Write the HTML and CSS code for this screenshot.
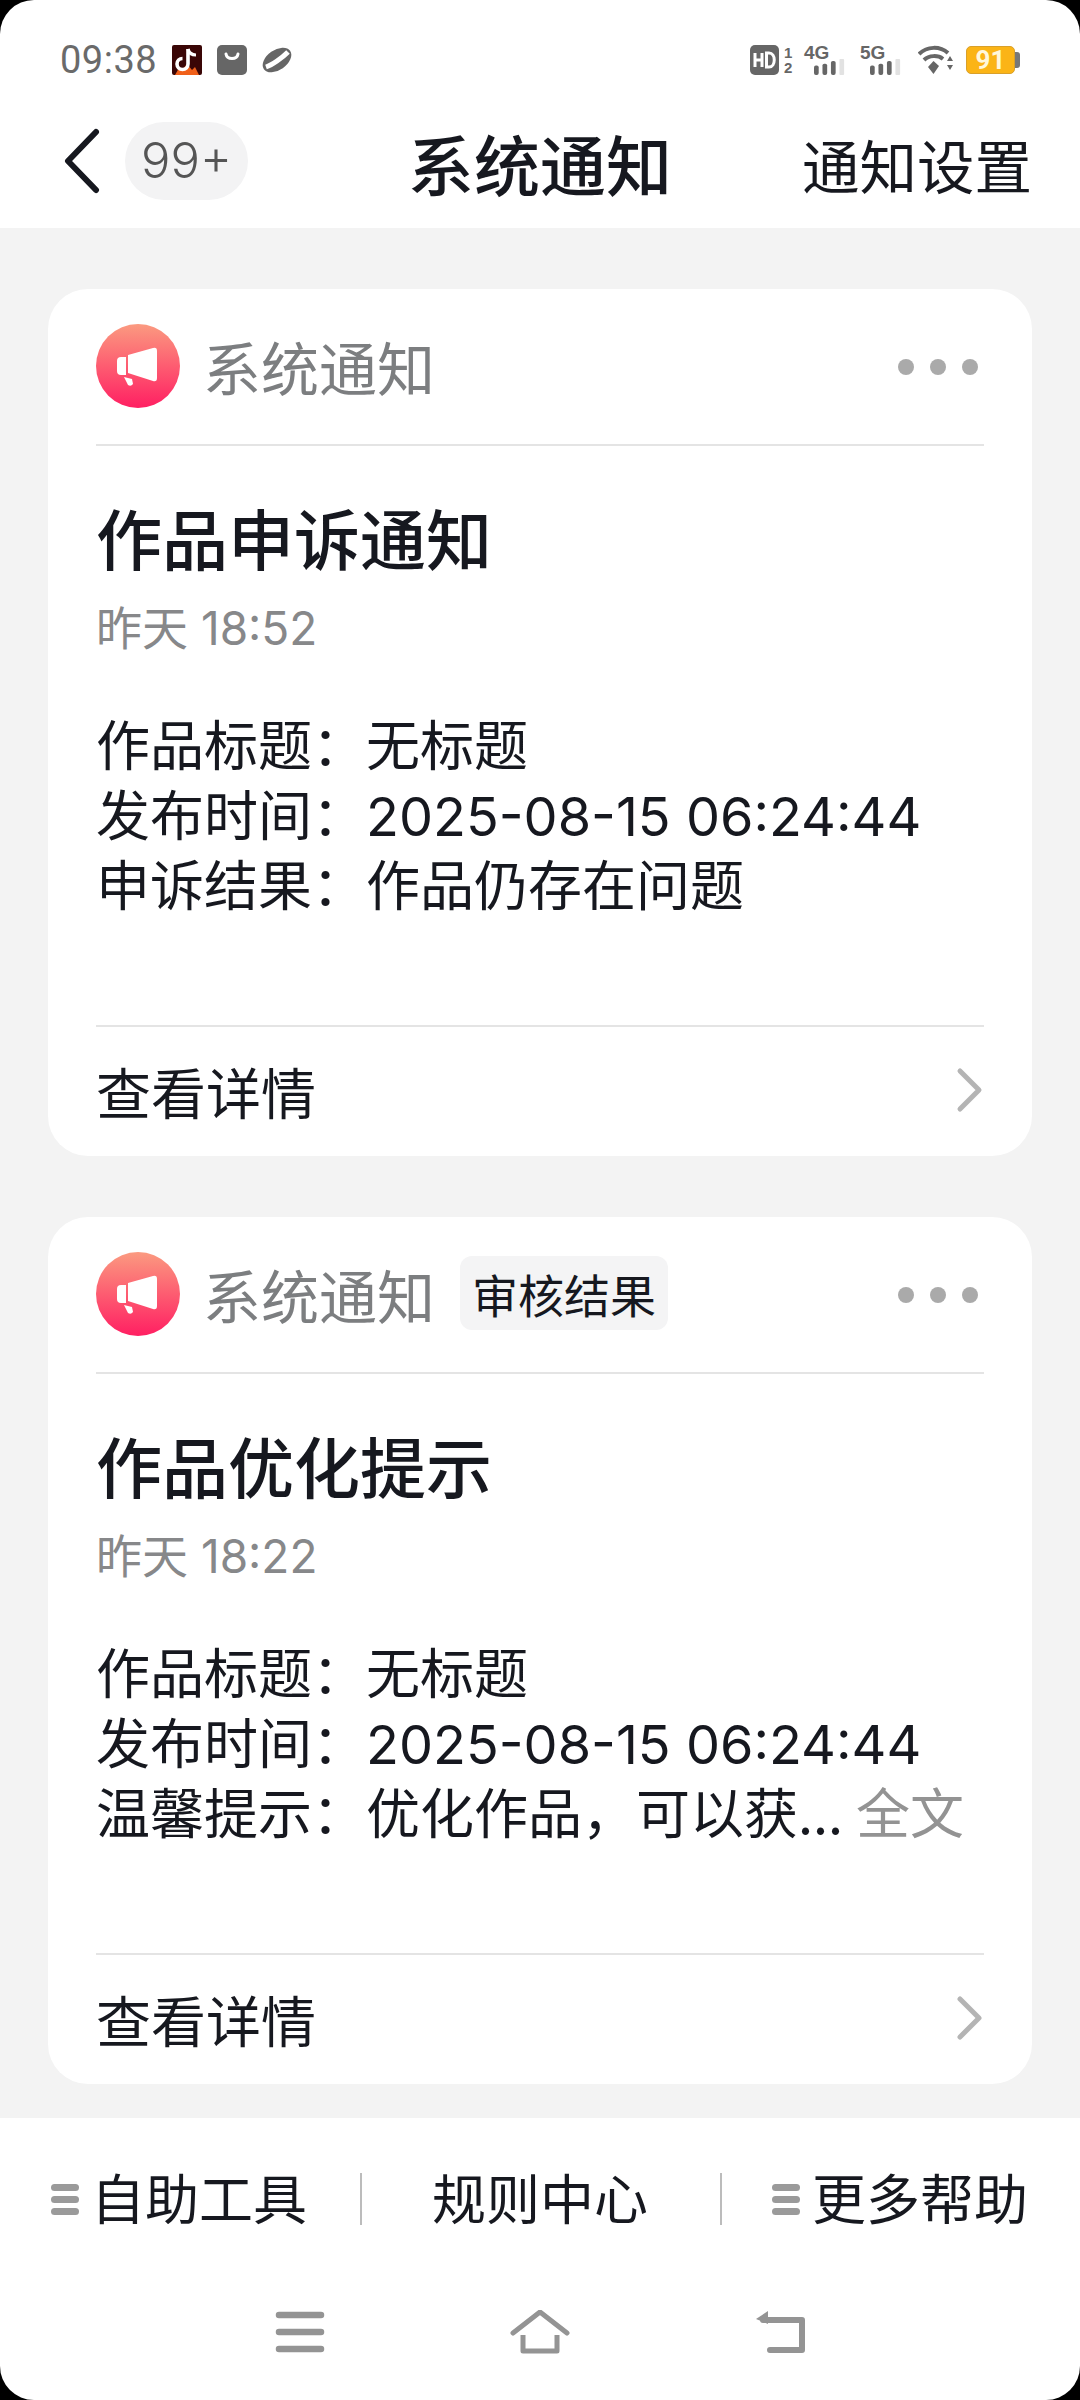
FILE: index.html
```html
<!DOCTYPE html>
<html lang="zh">
<head>
    <meta charset="utf-8">
    <title>系统通知</title>
    <link rel="stylesheet" href="styles.css">
</head>
<body>
    <div class="screen">
        <div class="status">
            <div class="status-left">
                <span class="clock">09:38</span>
                <svg class="s-icon" viewBox="0 0 30 30">
                    <rect width="30" height="30" rx="2" fill="#3a0606"/>
                    <path d="M3 30 L7 23 L10 25 L15 19 L20 25 L23 22 L27 30 Z" fill="#f0601a"/>
                    <path d="M16 4 V19 A5.5 5.5 0 1 1 10.500 13.500" fill="none" stroke="#fff" stroke-width="3.600"/>
                    <path d="M16 4 C17 8 20 10 24 10" fill="none" stroke="#fff" stroke-width="3.200"/>
                </svg>
                <svg class="s-icon" viewBox="0 0 30 30">
                    <rect width="30" height="30" rx="5" fill="#666"/>
                    <path d="M9 9 C10 15 20 15 21 9" fill="none" stroke="#fff" stroke-width="3" stroke-linecap="round"/>
                </svg>
                <svg class="s-icon" viewBox="0 0 30 30">
                    <ellipse cx="15" cy="15" rx="16" ry="10" fill="#666" transform="rotate(-35 15 15)"/>
                    <path d="M4 22 C10 20 20 13 26 7" fill="none" stroke="#fff" stroke-width="5"/>
                </svg>
            </div>
            <div class="status-right">
                <svg class="hd" viewBox="0 0 29 30">
                    <rect width="29" height="30" rx="5" fill="#666"/>
                    <path d="M5 8 V22 M12 8 V22 M5 15 H12" fill="none" stroke="#fff" stroke-width="3"/>
                    <path d="M16.500 8 V22 H19 C26 22 26 8 19 8 Z" fill="none" stroke="#fff" stroke-width="3"/>
                </svg>
                <span class="sim-num"><span>1</span><span>2</span></span>
                <span class="signal">
                    <span class="net">4G</span>
                    <svg class="bars" viewBox="0 0 34 17">
                        <rect x="0" y="7" width="5" height="10" rx="2" fill="#666"/>
                        <rect x="9" y="5" width="5" height="12" rx="2" fill="#666"/>
                        <rect x="18" y="2" width="5" height="15" rx="2" fill="#666"/>
                        <rect x="27" y="0" width="5" height="17" rx="1" fill="#e2e2e2"/>
                    </svg>
                </span>
                <span class="signal">
                    <span class="net">5G</span>
                    <svg class="bars" viewBox="0 0 34 17">
                        <rect x="0" y="7" width="5" height="10" rx="2" fill="#666"/>
                        <rect x="9" y="5" width="5" height="12" rx="2" fill="#666"/>
                        <rect x="18" y="2" width="5" height="15" rx="2" fill="#666"/>
                        <rect x="27" y="0" width="5" height="17" rx="1" fill="#e2e2e2"/>
                    </svg>
                </span>
                <svg class="wifi" viewBox="0 0 37 30">
                    <path d="M1 9 C9 1 22 1 30 8" fill="none" stroke="#666" stroke-width="4"/>
                    <path d="M6 15 C11 10 20 10 25 14" fill="none" stroke="#666" stroke-width="4"/>
                    <path d="M10 22 L15.500 16 L21 21 L15.500 29 Z" fill="#666"/>
                    <path d="M29 16 L32 11 L35 16 Z M29 20 H35 L32 25 Z" fill="#666"/>
                </svg>
                <div class="battery"><span class="level">91</span><span class="cap"></span></div>
            </div>
        </div>

        <div class="nav">
            <svg class="back" viewBox="0 0 40 66">
                <path d="M34 4 L6 33 L34 62" fill="none" stroke="#16181f" stroke-width="6" stroke-linecap="round" stroke-linejoin="round"/>
            </svg>
            <span class="count">99+</span>
            <h1 class="nav-title">系统通知</h1>
            <span class="nav-link">通知设置</span>
        </div>

        <div class="list">
            <div class="card">
                <div class="card-head">
                    <svg class="horn" viewBox="0 0 84 84">
                        <use href="#horn-shape"/>
                    </svg>
                    <span class="source">系统通知</span>
                    <span class="dots"><i></i><i></i><i></i></span>
                </div>
                <div class="card-title">作品申诉通知</div>
                <div class="card-time">昨天 18:52</div>
                <div class="rows">
                    <div class="row"><span class="key">作品标题：</span><span>无标题</span></div>
                    <div class="row"><span class="key">发布时间：</span><span class="num">2025-08-15 06:24:44</span></div>
                    <div class="row"><span class="key">申诉结果：</span><span>作品仍存在问题</span></div>
                </div>
                <div class="card-foot">
                    <span>查看详情</span>
                    <svg class="chev" viewBox="0 0 28 46"><path d="M4 4 L23 23 L4 42" fill="none" stroke="#b4b4b4" stroke-width="5" stroke-linecap="round" stroke-linejoin="round"/></svg>
                </div>
            </div>

            <div class="card">
                <div class="card-head">
                    <svg class="horn" viewBox="0 0 84 84">
                        <use href="#horn-shape"/>
                    </svg>
                    <span class="source">系统通知</span>
                    <span class="tag">审核结果</span>
                    <span class="dots"><i></i><i></i><i></i></span>
                </div>
                <div class="card-title">作品优化提示</div>
                <div class="card-time">昨天 18:22</div>
                <div class="rows">
                    <div class="row"><span class="key">作品标题：</span><span>无标题</span></div>
                    <div class="row"><span class="key">发布时间：</span><span class="num">2025-08-15 06:24:44</span></div>
                    <div class="row"><span class="key">温馨提示：</span><span>优化作品，可以获...</span><span class="more">全文</span></div>
                </div>
                <div class="card-foot">
                    <span>查看详情</span>
                    <svg class="chev" viewBox="0 0 28 46"><path d="M4 4 L23 23 L4 42" fill="none" stroke="#b4b4b4" stroke-width="5" stroke-linecap="round" stroke-linejoin="round"/></svg>
                </div>
            </div>
        </div>

        <div class="tabs">
            <div class="tab"><span class="menu-mini"><i></i><i></i><i></i></span>自助工具</div>
            <div class="tab">规则中心</div>
            <div class="tab"><span class="menu-mini"><i></i><i></i><i></i></span>更多帮助</div>
        </div>

        <div class="sysbar">
            <svg class="sys-icon" viewBox="0 0 60 44">
                <path d="M9 5 H51 M9 22 H51 M9 39 H51" fill="none" stroke="#949494" stroke-width="6.500" stroke-linecap="round"/>
            </svg>
            <svg class="sys-icon" viewBox="0 0 60 44">
                <path d="M3 23 L30 2 L57 23" fill="none" stroke="#949494" stroke-width="5" stroke-linecap="round" stroke-linejoin="round"/>
                <path d="M13 25 V41 H47 V25" fill="none" stroke="#949494" stroke-width="5" stroke-linejoin="round"/>
            </svg>
            <svg class="sys-icon" viewBox="0 0 60 44">
                <path d="M13 10 H52 V40 H20" fill="none" stroke="#949494" stroke-width="6" stroke-linejoin="round" stroke-linecap="round"/>
                <path d="M18 1 L6 9 L18 14 Z" fill="#949494"/>
            </svg>
        </div>
    </div>

    <svg class="defs" width="0" height="0">
        <defs>
            <linearGradient id="horn-bg" x1="0" y1="0" x2="0" y2="1">
                <stop offset="0" stop-color="#fb9a80"/>
                <stop offset="1" stop-color="#ff1f62"/>
            </linearGradient>
            <g id="horn-shape">
                <circle cx="42" cy="42" r="42" fill="url(#horn-bg)"/>
                <path d="M25 33 Q21 33 21 37 V47 Q21 51 25 51 H30 V33 Z" fill="#fff"/>
                <path d="M32 31 L57 24 Q61 23 61 27 V54 Q61 58 57 57 L32 49 Z" fill="#fff"/>
                <path d="M28 53 L36 55 L37 60 Q35 63 32 61 Z" fill="#fff"/>
            </g>
        </defs>
    </svg>
</body>
</html>
```

FILE: styles.css
```css
* {
    box-sizing: border-box;
}
body {
    margin: 0;
    width: 1080px;
    height: 2400px;
    background-color: black;
    overflow: hidden;
    font-family: "Noto Sans CJK SC", "Noto Sans", sans-serif;
    color: #16181f;
}
.defs {
    display: block;
    height: 0;
}
.screen {
    width: 1080px;
    height: 2400px;
    display: flex;
    flex-direction: column;
    background-color: white;
    border-radius: 34px;
    overflow: hidden;
}

/* status bar */
.status {
    height: 105px;
    padding: 45px 60px 0 60px;
    display: flex;
    justify-content: space-between;
    align-items: flex-start;
    flex-shrink: 0;
}
.status-left,
.status-right {
    display: flex;
    align-items: center;
    height: 30px;
}
.clock {
    font-family: Roboto, sans-serif;
    font-size: 38px;
    line-height: 30px;
    color: #6a6a6a;
    width: 112px;
    letter-spacing: 0.5px;
}
.s-icon {
    width: 30px;
    height: 30px;
    margin-right: 15px;
}
.hd {
    width: 29px;
    height: 30px;
}
.sim-num {
    width: 8px;
    margin: 0 12px 0 5px;
    display: flex;
    flex-direction: column;
    font: bold 15px/15px "Liberation Sans", sans-serif;
    color: #666;
}
.signal {
    width: 56px;
    height: 30px;
    position: relative;
}
.net {
    position: absolute;
    left: 0;
    top: -3px;
    font: bold 19px/22px "Liberation Sans", sans-serif;
    color: #666;
}
.bars {
    position: absolute;
    left: 9px;
    top: 14px;
    width: 34px;
    height: 16px;
}
.wifi {
    width: 37px;
    height: 30px;
    margin: 0 11px 0 2px;
}
.battery {
    width: 54px;
    height: 28px;
    display: flex;
    align-items: center;
}
.level {
    width: 49px;
    height: 28px;
    background-color: #fbb416;
    border: 1px solid #d9a02a;
    border-radius: 5px;
    color: #fff8dc;
    font: bold 26px/26px Roboto, sans-serif;
    text-align: center;
}
.cap {
    width: 5px;
    height: 16px;
    background-color: #777;
    border-radius: 0 3px 3px 0;
}

/* header */
.nav {
    height: 123px;
    flex-shrink: 0;
    display: flex;
    align-items: center;
    padding: 0 48px 11px 62px;
    position: relative;
}
.back {
    width: 40px;
    height: 66px;
}
.count {
    width: 123px;
    height: 78px;
    margin-left: 23px;
    border-radius: 39px;
    background-color: #f3f3f4;
    color: #555;
    font: 300 49px/78px Inter, sans-serif;
    text-align: center;
}
.nav-title {
    position: absolute;
    left: 0;
    right: 0;
    top: 5px;
    margin: 0;
    text-align: center;
    font-size: 66px;
    line-height: 105px;
    font-weight: 500;
}
.nav-link {
    margin: 7px 0 0 auto;
    font-size: 57.5px;
    line-height: 105px;
}

/* cards */
.list {
    height: 1890px;
    flex-shrink: 0;
    background-color: #f3f3f3;
    padding: 61px 48px 0;
    display: flex;
    flex-direction: column;
    gap: 61px;
}
.card {
    height: 867px;
    padding: 0 48px;
    background-color: white;
    border-radius: 40px;
    display: flex;
    flex-direction: column;
}
.card-head {
    height: 157px;
    flex-shrink: 0;
    padding-top: 35px;
    border-bottom: 2px solid #e4e4e4;
    display: flex;
    align-items: flex-start;
}
.horn {
    width: 84px;
    height: 84px;
    flex-shrink: 0;
}
.source {
    margin-left: 23px;
    font-size: 58px;
    line-height: 84px;
    color: #7c7e80;
}
.tag {
    margin: 4px 0 0 25px;
    width: 208px;
    height: 74px;
    border-radius: 12px;
    background-color: #f4f4f5;
    font-size: 46px;
    line-height: 74px;
    text-align: center;
}
.dots {
    margin: 35px 0 0 auto;
    padding-right: 6px;
    display: flex;
    gap: 16px;
}
.dots i {
    width: 16px;
    height: 16px;
    border-radius: 50%;
    background-color: #aaa;
}
.card-title {
    margin-top: 45px;
    font-size: 66px;
    line-height: 90px;
    font-weight: 500;
}
.card-time {
    margin-top: 17px;
    font-size: 46px;
    line-height: 60px;
    font-family: Inter, "Noto Sans CJK SC", sans-serif;
    color: #87888a;
}
.rows {
    margin-top: 50px;
    font-size: 54px;
    line-height: 70px;
}
.row {
    height: 70px;
    display: flex;
    align-items: baseline;
    white-space: nowrap;
}
.key {
    width: 270px;
    flex-shrink: 0;
}
.num {
    font-family: Inter, sans-serif;
    font-size: 54px;
}
.more {
    margin-left: 13px;
    color: #939393;
}
.card-foot {
    margin-top: auto;
    height: 131px;
    padding-bottom: 4px;
    border-top: 2px solid #e4e4e4;
    display: flex;
    align-items: center;
    justify-content: space-between;
    font-size: 55px;
}
.chev {
    width: 28px;
    height: 46px;
}

/* bottom tabs */
.tabs {
    height: 162px;
    flex-shrink: 0;
    display: grid;
    grid-template-columns: repeat(3, 1fr);
    align-items: center;
}
.tab {
    height: 52px;
    padding: 0 2px 4px 0;
    display: flex;
    align-items: center;
    justify-content: center;
    gap: 12px;
    font-size: 54px;
    line-height: 48px;
    border-left: 2px solid #bcbcbc;
}
.tab:first-child {
    border-left: 0;
}
.menu-mini {
    display: flex;
    flex-direction: column;
    gap: 5px;
    width: 28px;
    margin-top: 4px;
}
.menu-mini i {
    height: 7px;
    border-radius: 4px;
    background-color: #9a9a9a;
}

/* system nav */
.sysbar {
    flex: 1;
    display: flex;
    justify-content: center;
    padding-top: 30px;
}
.sys-icon {
    width: 60px;
    height: 44px;
    margin: 0 90px;
}
```
